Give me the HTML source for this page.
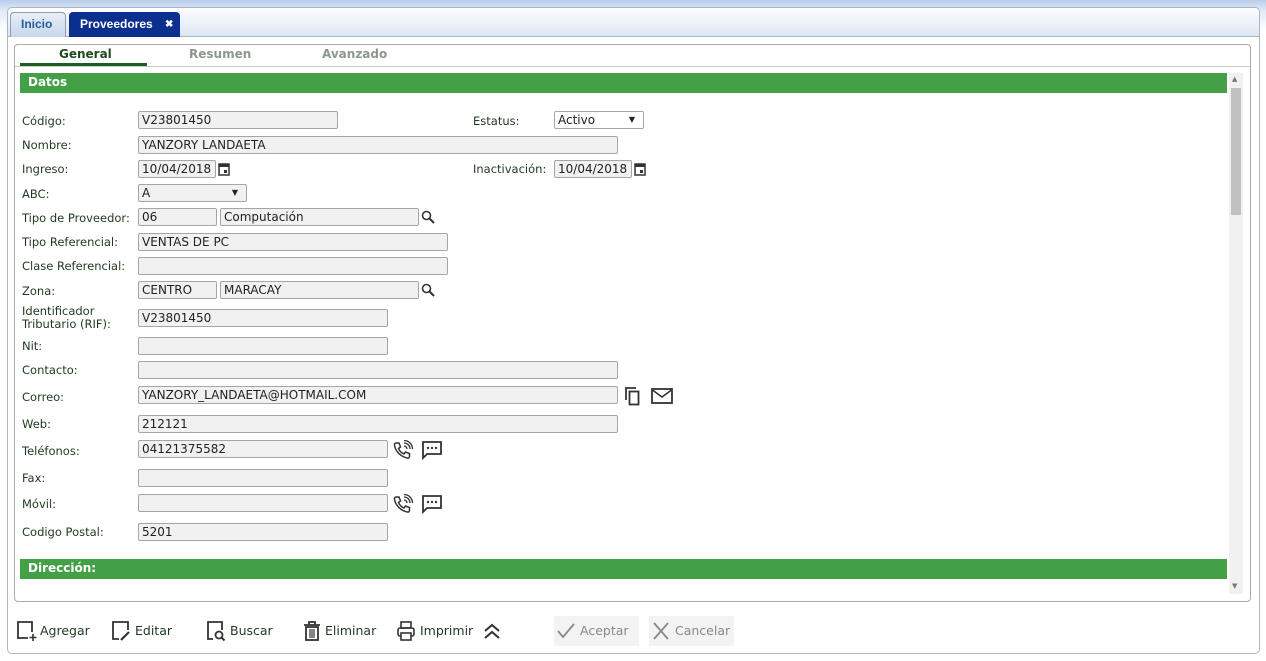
<!DOCTYPE html>
<html><head><meta charset="utf-8"><style>
*{box-sizing:border-box;margin:0;padding:0}
body{width:1266px;height:661px;background:#fff;font-family:"DejaVu Sans","Liberation Sans",sans-serif;font-size:11.5px;color:#222;position:relative;overflow:hidden}
.a{position:absolute}
#top{left:0;top:0;width:1266px;height:661px;background:linear-gradient(#b9cdea,#dfe8f5 10px,#fff 30px)}
#win{left:7px;top:7px;width:1253px;height:647px;border:1px solid #a9b6c6;border-radius:5px;background:#fff}
#tabbar{left:8px;top:8px;width:1251px;height:29px;background:linear-gradient(#fdfeff,#dce7f4);border-bottom:1px solid #a9b6c6;border-radius:5px 5px 0 0}
.tab{position:absolute;top:12px;height:25px;border:1px solid #99a;border-bottom:none;border-radius:4px 4px 0 0;font-weight:bold;font-size:12px;line-height:23px;padding-left:12px;white-space:nowrap;overflow:hidden;font-family:"Liberation Sans",sans-serif}
#inner{left:14px;top:44px;width:1237px;height:558px;border:1px solid #aaa;border-radius:4px}
.st{position:absolute;top:47px;font-weight:bold;font-size:12px;color:#8a9a8a}
.hd{position:absolute;left:20px;width:1207px;height:20px;background:#43a047;color:#fff;font-weight:bold;font-size:12px;line-height:19px;padding-left:8px}
.l{position:absolute;left:22px;color:#1e3a1e;font-size:11.5px}
.i{position:absolute;height:18px;border:1px solid #a5a5a5;border-radius:2px;background:#f1f1f1;font-size:12px;line-height:16px;padding-left:3px;color:#222}
.sel::after{content:"▼";position:absolute;right:8px;font-size:8px;top:0}
svg{position:absolute}
.bt{position:absolute;top:623px;font-size:12.5px;color:#1e3a1e}
</style></head><body>
<div class="a" id="top"></div>
<div class="a" id="win"></div>
<div class="a" id="tabbar"></div>
<div class="tab" style="left:10px;width:56px;background:linear-gradient(#e8eff8,#c6d6ea);color:#2a5a9a;padding-left:10px">Inicio</div>
<div class="tab" style="left:69px;width:111px;background:#0a2f8f;color:#fff;border-color:#0a2f8f;padding-left:10px">Proveedores<span style="position:absolute;left:95px;top:0;font-size:10px">✖</span></div>
<div class="a" id="inner"></div>
<div class="a" style="left:15px;top:66px;width:1235px;height:1px;background:#ccc"></div>
<div class="st" style="left:59px;color:#1e4a1e">General</div>
<div class="a" style="left:20px;top:63px;width:127px;height:3px;background:#1b5e20"></div>
<div class="st" style="left:189px">Resumen</div>
<div class="st" style="left:322px">Avanzado</div>
<div class="hd" style="top:73px">Datos</div>
<div class="hd" style="top:559px">Dirección:</div>
<div class="a" style="left:1229px;top:73px;width:14px;height:521px;background:#f1f1f1"></div>
<div class="a" style="left:1231px;top:88px;width:10px;height:127px;background:#c1c1c1"></div>
<div class="a" style="left:1232px;top:75px;font-size:7px;color:#777">▲</div>
<div class="a" style="left:1232px;top:582px;font-size:7px;color:#777">▼</div>

<div class="l" style="top:114px">Código:</div><div class="i" style="left:138px;top:111px;width:200px">V23801450</div>
<div class="l" style="left:473px;top:114px">Estatus:</div><div class="i sel" style="left:554px;top:111px;width:90px;background:#fff">Activo</div>
<div class="l" style="top:138px">Nombre:</div><div class="i" style="left:138px;top:136px;width:480px">YANZORY LANDAETA</div>
<div class="l" style="top:162px">Ingreso:</div><div class="i" style="left:138px;top:160px;width:78px">10/04/2018</div>
<svg style="left:218px;top:162px" width="12" height="14" viewBox="0 0 12 14"><rect x="1" y="2" width="10" height="11" fill="none" stroke="#333" stroke-width="1.5"/><rect x="1" y="2" width="10" height="3" fill="#333"/><rect x="6" y="8" width="3" height="3" fill="#333"/></svg>
<div class="l" style="left:473px;top:162px">Inactivación:</div><div class="i" style="left:554px;top:160px;width:78px">10/04/2018</div>
<svg style="left:634px;top:162px" width="12" height="14" viewBox="0 0 12 14"><rect x="1" y="2" width="10" height="11" fill="none" stroke="#333" stroke-width="1.5"/><rect x="1" y="2" width="10" height="3" fill="#333"/><rect x="6" y="8" width="3" height="3" fill="#333"/></svg>
<div class="l" style="top:187px">ABC:</div><div class="i sel" style="left:138px;top:184px;width:109px">A</div>
<div class="l" style="top:211px">Tipo de Proveedor:</div><div class="i" style="left:138px;top:208px;width:79px">06</div><div class="i" style="left:220px;top:208px;width:199px">Computación</div>
<svg style="left:421px;top:210px" width="14" height="14" viewBox="0 0 14 14"><circle cx="5.5" cy="5.5" r="4" fill="none" stroke="#333" stroke-width="1.6"/><path d="M8.5 8.5L13 13" stroke="#333" stroke-width="2"/></svg>
<div class="l" style="top:235px">Tipo Referencial:</div><div class="i" style="left:138px;top:233px;width:310px">VENTAS DE PC</div>
<div class="l" style="top:259px">Clase Referencial:</div><div class="i" style="left:138px;top:257px;width:310px"></div>
<div class="l" style="top:284px">Zona:</div><div class="i" style="left:138px;top:281px;width:79px">CENTRO</div><div class="i" style="left:220px;top:281px;width:199px">MARACAY</div>
<svg style="left:421px;top:283px" width="14" height="14" viewBox="0 0 14 14"><circle cx="5.5" cy="5.5" r="4" fill="none" stroke="#333" stroke-width="1.6"/><path d="M8.5 8.5L13 13" stroke="#333" stroke-width="2"/></svg>
<div class="l" style="top:305px;line-height:13px">Identificador<br>Tributario (RIF):</div><div class="i" style="left:138px;top:309px;width:250px">V23801450</div>
<div class="l" style="top:339px">Nit:</div><div class="i" style="left:138px;top:337px;width:250px"></div>
<div class="l" style="top:363px">Contacto:</div><div class="i" style="left:138px;top:361px;width:480px"></div>
<div class="l" style="top:390px">Correo:</div><div class="i" style="left:138px;top:386px;width:480px">YANZORY_LANDAETA@HOTMAIL.COM</div>
<svg style="left:624px;top:386px" width="18" height="20" viewBox="0 0 18 20"><path d="M2 14V2h10" fill="none" stroke="#333" stroke-width="1.8"/><rect x="5.5" y="5.5" width="9" height="13" fill="none" stroke="#333" stroke-width="1.8"/></svg>
<svg style="left:651px;top:388px" width="22" height="16" viewBox="0 0 22 16"><rect x="1" y="1" width="20" height="14" fill="none" stroke="#333" stroke-width="1.8"/><path d="M1.5 2L11 9L20.5 2" fill="none" stroke="#333" stroke-width="1.6"/></svg>
<div class="l" style="top:417px">Web:</div><div class="i" style="left:138px;top:415px;width:480px">212121</div>
<div class="l" style="top:444px">Teléfonos:</div><div class="i" style="left:138px;top:440px;width:250px">04121375582</div>
<div class="l" style="top:471px">Fax:</div><div class="i" style="left:138px;top:469px;width:250px"></div>
<div class="l" style="top:497px">Móvil:</div><div class="i" style="left:138px;top:494px;width:250px"></div>
<div class="l" style="top:525px">Codigo Postal:</div><div class="i" style="left:138px;top:523px;width:250px">5201</div>
<svg style="left:392px;top:440px" width="22" height="20" viewBox="0 0 22 20"><path d="M4 3l3 0 1.5 4-2 1.5c1 2.5 3 4.5 5.5 5.5l1.5-2 4 1.5v3c0 1-1 2-2 1.5C9 17 3 11 2.5 5 2.3 4 3 3 4 3z" fill="none" stroke="#333" stroke-width="1.5"/><path d="M12 6a3 3 0 0 1 3 3M12 3a6 6 0 0 1 6 6M12 0.5a8.5 8.5 0 0 1 8.5 8.5" fill="none" stroke="#333" stroke-width="1.3"/></svg>
<svg style="left:421px;top:440px" width="22" height="20" viewBox="0 0 22 20"><path d="M2 2h18v12H6l-4 4z" fill="none" stroke="#333" stroke-width="1.8"/><circle cx="7" cy="8" r="1.2" fill="#333"/><circle cx="11" cy="8" r="1.2" fill="#333"/><circle cx="15" cy="8" r="1.2" fill="#333"/></svg>
<svg style="left:392px;top:494px" width="22" height="20" viewBox="0 0 22 20"><path d="M4 3l3 0 1.5 4-2 1.5c1 2.5 3 4.5 5.5 5.5l1.5-2 4 1.5v3c0 1-1 2-2 1.5C9 17 3 11 2.5 5 2.3 4 3 3 4 3z" fill="none" stroke="#333" stroke-width="1.5"/><path d="M12 6a3 3 0 0 1 3 3M12 3a6 6 0 0 1 6 6M12 0.5a8.5 8.5 0 0 1 8.5 8.5" fill="none" stroke="#333" stroke-width="1.3"/></svg>
<svg style="left:421px;top:494px" width="22" height="20" viewBox="0 0 22 20"><path d="M2 2h18v12H6l-4 4z" fill="none" stroke="#333" stroke-width="1.8"/><circle cx="7" cy="8" r="1.2" fill="#333"/><circle cx="11" cy="8" r="1.2" fill="#333"/><circle cx="15" cy="8" r="1.2" fill="#333"/></svg>

<svg style="left:16px;top:620px" width="22" height="22" viewBox="0 0 22 22"><path d="M12 18H2V2h14v10" fill="none" stroke="#333" stroke-width="1.8"/><path d="M17 14v7M13.5 17.5h7" stroke="#333" stroke-width="1.6"/></svg>
<div class="bt" style="left:40px">Agregar</div>
<svg style="left:111px;top:620px" width="22" height="22" viewBox="0 0 22 22"><path d="M8 19H2V2h15v8" fill="none" stroke="#333" stroke-width="1.8"/><path d="M10 20l8-8" stroke="#333" stroke-width="2.2"/></svg>
<div class="bt" style="left:135px">Editar</div>
<svg style="left:206px;top:620px" width="22" height="22" viewBox="0 0 22 22"><path d="M7 19H2V2h14v8" fill="none" stroke="#333" stroke-width="1.8"/><circle cx="13" cy="15" r="3.5" fill="none" stroke="#333" stroke-width="1.8"/><path d="M15.5 17.5l3 3" stroke="#333" stroke-width="2"/></svg>
<div class="bt" style="left:230px">Buscar</div>
<svg style="left:302px;top:620px" width="20" height="22" viewBox="0 0 20 22"><path d="M2 5h16M7 5V2h6v3" fill="none" stroke="#333" stroke-width="1.8"/><rect x="4" y="7" width="12" height="13" fill="none" stroke="#333" stroke-width="1.8"/><path d="M8 9v9M10 9v9M12 9v9" stroke="#333" stroke-width="1.2"/></svg>
<div class="bt" style="left:325px">Eliminar</div>
<svg style="left:396px;top:620px" width="20" height="22" viewBox="0 0 20 22"><rect x="5" y="2" width="10" height="6" fill="none" stroke="#333" stroke-width="1.6"/><rect x="2" y="8" width="16" height="8" rx="2" fill="none" stroke="#333" stroke-width="1.6"/><rect x="5" y="13" width="10" height="7" fill="#fff" stroke="#333" stroke-width="1.6"/></svg>
<div class="bt" style="left:420px">Imprimir</div>
<svg style="left:482px;top:622px" width="20" height="18" viewBox="0 0 20 18"><path d="M3 9l7-6 7 6M3 16l7-6 7 6" fill="none" stroke="#333" stroke-width="2"/></svg>
<div class="a" style="left:554px;top:616px;width:85px;height:30px;background:#f3f3f3"></div>
<svg style="left:557px;top:623px" width="18" height="16" viewBox="0 0 18 16"><path d="M1 8l5 6L17 1" fill="none" stroke="#888" stroke-width="1.8"/></svg>
<div class="bt" style="left:580px;color:#888">Aceptar</div>
<div class="a" style="left:649px;top:616px;width:85px;height:30px;background:#f3f3f3"></div>
<svg style="left:653px;top:622px" width="16" height="18" viewBox="0 0 16 18"><path d="M1 1l14 16M15 1L1 17" stroke="#888" stroke-width="1.8"/></svg>
<div class="bt" style="left:675px;color:#888">Cancelar</div>
</body></html>
